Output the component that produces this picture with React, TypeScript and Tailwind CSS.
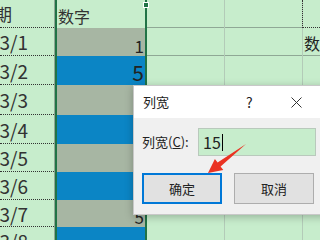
import React from "react";

const rows = [
  { h: 28, date: "2023/3/1", color: "bg-[#a7b6a3]", num: "1", size: "text-[17px]" },
  { h: 29, date: "2023/3/2", color: "bg-[#0b85c5]", num: "5", size: "text-[21px]" },
  { h: 30, date: "2023/3/3", color: "bg-[#a7b6a3]", num: "", size: "text-[17px]" },
  { h: 29, date: "2023/3/4", color: "bg-[#0b85c5]", num: "1", size: "text-[17px]" },
  { h: 28, date: "2023/3/5", color: "bg-[#a7b6a3]", num: "", size: "text-[17px]" },
  { h: 28, date: "2023/3/6", color: "bg-[#0b85c5]", num: "5", size: "text-[17px]" },
  { h: 27, date: "2023/3/7", color: "bg-[#a7b6a3]", num: "5", size: "text-[17px]" },
  { h: 28, date: "2023/3/8", color: "bg-[#0b85c5]", num: "4", size: "text-[17px]" },
];

export default function App() {
  return (
    <div className="relative w-[320px] h-[240px] overflow-hidden bg-[#c7edcc] flex font-['Noto_Sans_CJK_SC',sans-serif] text-[#333]">
      {/* Column A */}
      <div className="w-[55px] shrink-0 border-r border-[#8fa895] flex flex-col">
        <div className="h-[28px] shrink-0 border-b border-dotted border-[#333] flex items-center justify-end pr-[42px] whitespace-nowrap overflow-hidden text-[17px] leading-none">
          日期
        </div>
        {rows.map((r, i) => (
          <div
            key={i}
            style={{ height: r.h }}
            className="shrink-0 border-b border-dotted border-[#333] flex items-center justify-end pr-[26px] whitespace-nowrap overflow-hidden text-[19px] leading-none"
          >
            {r.date}
          </div>
        ))}
      </div>

      {/* Column B (selected) */}
      <div className="relative w-[92px] shrink-0 border-x-2 border-[#217346] flex flex-col">
        <div className="h-[28px] shrink-0 flex items-center pl-[1px] pt-[3px] text-[16px] leading-none">
          数字
        </div>
        {rows.map((r, i) => (
          <div
            key={i}
            style={{ height: r.h }}
            className={`shrink-0 ${r.color} flex items-end justify-end pr-[1px] pb-[2px] ${r.size} leading-none text-[#222]`}
          >
            {r.num}
          </div>
        ))}
        <div className="absolute right-[-4px] top-[2px] w-[6px] h-[6px] bg-[#217346] border border-white" />
      </div>

      {/* Column C */}
      <div className="w-[78px] shrink-0 border-r border-[#b3cbb8] flex flex-col">
        <div className="h-[28px] shrink-0 border-b border-[#8fa895]" />
        <div className="h-[28px] shrink-0 border-b border-[#8fa895]" />
      </div>

      {/* Column D */}
      <div className="w-[78px] shrink-0 border-r border-[#b3cbb8] flex flex-col">
        <div className="h-[28px] shrink-0 border-b border-[#8fa895]" />
        <div className="h-[28px] shrink-0 border-b border-[#8fa895]" />
      </div>

      {/* Column E */}
      <div className="flex-1 flex flex-col">
        <div className="h-[28px] shrink-0 border-b border-dotted border-l border-l-[#333] border-b-[#333] -ml-px" />
        <div className="h-[28px] shrink-0 border-b border-[#8fa895] flex items-center pl-[1px] pt-[2px] whitespace-nowrap overflow-hidden text-[16px] leading-none text-[#222]">
          数字
        </div>
      </div>

      {/* Dialog */}
      <div className="absolute left-[133px] top-[85px] w-[200px] h-[130px] border border-[#c8c8c8] shadow-[0_2px_8px_rgba(0,0,0,0.25)] flex flex-col">
        <div className="h-[32px] shrink-0 bg-white flex items-center text-[13px] text-[#222]">
          <span className="pl-[9px]">列宽</span>
          <span className="ml-[77px] text-[14px]">?</span>
          <svg className="ml-[38px]" width="11" height="11" viewBox="0 0 11 11">
            <path d="M0.5 0.5 L10.5 10.5 M10.5 0.5 L0.5 10.5" stroke="#333" strokeWidth="1" />
          </svg>
        </div>
        <div className="flex-1 bg-[#f0f0f0] flex flex-col pl-[8px]">
          <div className="mt-[10px] flex items-center h-[28px]">
            <span className="text-[13px] text-[#222] w-[56px] whitespace-nowrap">
              列宽(<span className="underline">C</span>):
            </span>
            <div className="w-[118px] h-[28px] bg-[#c7edcc] border border-[#b9c9bc] flex items-center pl-[4px]">
              <span className="text-[16px] leading-none text-[#222]">15</span>
              <span className="w-px h-[17px] bg-black ml-[1px]" />
            </div>
          </div>
          <div className="mt-[17px] flex gap-[12px]">
            <div className="w-[80px] h-[31px] bg-[#e1e1e1] border-2 border-[#0078d7] flex items-center justify-center text-[13px] text-[#222]">
              确定
            </div>
            <div className="w-[80px] h-[31px] bg-[#e1e1e1] border border-[#adadad] flex items-center justify-center text-[13px] text-[#222]">
              取消
            </div>
          </div>
        </div>
      </div>

      {/* Red arrow */}
      <svg className="absolute left-0 top-0 pointer-events-none" width="320" height="240" viewBox="0 0 320 240">
        <polygon
          points="246,144 217.6,162.6 214.9,159.1 208,173 223.3,170.1 220.6,166.6"
          fill="#ea3323"
        />
      </svg>
    </div>
  );
}
